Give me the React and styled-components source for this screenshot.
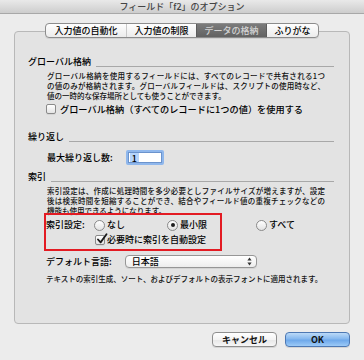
import React from "react";
import styled, { createGlobalStyle, css } from "styled-components";

const GlobalStyle = createGlobalStyle`
  html, body {
    margin: 0;
    padding: 0;
    background: #ececec;
  }
  body {
    font-family: "Noto Sans CJK JP", "Liberation Sans", sans-serif;
    font-weight: 500;
    color: #000;
  }
  * {
    box-sizing: border-box;
  }
`;

const Window = styled.div`
  width: 364px;
  height: 360px;
  display: flex;
  flex-direction: column;
  background: #ececec;
  overflow: hidden;
`;

const TitleBar = styled.div`
  flex: none;
  height: 14px;
  display: flex;
  align-items: center;
  justify-content: center;
  background: linear-gradient(#e9e9e9, #cdcdcd);
  border-bottom: 1px solid #a8a8a8;
  font-size: 9px;
  line-height: 13px;
  color: #444;
`;

const Panel = styled.div`
  flex: none;
  margin: 17px 14px 0;
  height: 293px;
  border: 1px solid #b8b8b8;
  border-radius: 4px;
  background: #e3e3e3;
  display: flex;
  flex-direction: column;
  padding: 0 15px 0 13px;
`;

const TabBar = styled.div`
  align-self: center;
  margin: -9px 0 0 2px;
  display: flex;
  height: 15px;
  border: 1px solid #8c8c8c;
  border-radius: 4px;
  background: linear-gradient(#fefefe, #ececec);
  overflow: hidden;
  box-shadow: 0 1px 0 rgba(0, 0, 0, 0.08);
`;

const Tab = styled.div`
  display: flex;
  align-items: center;
  justify-content: center;
  width: ${(p) => p.$w}px;
  font-size: 9px;
  line-height: 13px;
  color: ${(p) => (p.$active ? "#d4d4d4" : "#000")};
  background: ${(p) =>
    p.$active ? "linear-gradient(#7b7b7b, #626262)" : "transparent"};
  ${(p) =>
    p.$sep &&
    css`
      border-left: 1px solid ${p.$sep === "dark" ? "#5c5c5c" : "#c9c9c9"};
    `}
`;

const SectionHead = styled.div`
  display: flex;
  align-items: flex-end;
  gap: 5px;
  height: 12px;
  margin-top: ${(p) => p.$mt}px;
  font-size: 9px;
  line-height: 12px;
  &::after {
    content: "";
    flex: 1;
    height: 1px;
    margin-bottom: 1px;
    background: #a8a8a8;
  }
`;

const Body = styled.div`
  margin-left: 18px;
  display: flex;
  flex-direction: column;
`;

const Desc = styled.div`
  margin: 3px 0 0 1px;
  width: 278px;
  font-size: 7.5px;
  line-height: 10px;
  color: #111;
`;

const DescLine = styled.div`
  ${(p) =>
    p.$full &&
    css`
      text-align: justify;
      text-align-last: justify;
      text-justify: inter-character;
    `}
`;

const Row = styled.div`
  display: flex;
  align-items: center;
  height: ${(p) => p.$h || 12}px;
  margin-top: ${(p) => p.$mt || 0}px;
  margin-left: ${(p) => p.$ml || 0}px;
  font-size: 9px;
  line-height: 12px;
`;

const Label = styled.span`
  flex: none;
  width: ${(p) => (p.$w ? `${p.$w}px` : "auto")};
  font-size: ${(p) => p.$fs || 9}px;
  margin-left: ${(p) => p.$ml || 0}px;
  white-space: nowrap;
`;

const CheckBox = styled.span`
  position: relative;
  flex: none;
  width: 10px;
  height: 10px;
  border: 1px solid #8a8a8a;
  border-radius: 2px;
  background: linear-gradient(#ffffff, #e4e4e4);
  box-shadow: 0 1px 0 rgba(0, 0, 0, 0.06);
  svg {
    position: absolute;
    left: 0px;
    top: -3px;
  }
`;

const Option = styled.div`
  flex: none;
  display: flex;
  align-items: center;
  width: ${(p) => (p.$w ? `${p.$w}px` : "auto")};
`;

const Radio = styled.span`
  flex: none;
  width: 11px;
  height: 11px;
  border-radius: 50%;
  border: 1px solid #8a8a8a;
  background: linear-gradient(#ffffff, #e2e2e2);
  display: flex;
  align-items: center;
  justify-content: center;
  &::after {
    content: "";
    display: ${(p) => (p.$on ? "block" : "none")};
    width: 4px;
    height: 4px;
    border-radius: 50%;
    background: #1e1e1e;
  }
`;

const NumberField = styled.div`
  flex: none;
  width: 38px;
  height: 15px;
  margin-left: 13px;
  border: 2px solid #8fb7ec;
  border-radius: 2px;
  box-shadow: inset 0 0 0 1px #6b93cc;
  background: #fff;
  padding: 1px 0 1px 2px;
  display: flex;
`;

const Selected = styled.span`
  background: #b5d4fb;
  padding: 0 2px;
  font-size: 9px;
  line-height: 11px;
`;

const IndexBox = styled.div`
  position: relative;
  display: flex;
  flex-direction: column;
`;

const RedFrame = styled.div`
  position: absolute;
  left: -2px;
  top: -3px;
  width: 178px;
  bottom: -5px;
  border: 2px solid #e31b23;
  pointer-events: none;
`;

const Popup = styled.div`
  flex: none;
  width: 132px;
  height: 13px;
  margin-left: 13px;
  border: 1px solid #969696;
  border-radius: 4px;
  background: linear-gradient(#ffffff, #ededed);
  box-shadow: 0 1px 0 rgba(0, 0, 0, 0.07);
  display: flex;
  align-items: center;
  justify-content: space-between;
  padding: 0 4px 0 6px;
  font-size: 9px;
  line-height: 11px;
`;

const Note = styled.div`
  margin-top: 6px;
  font-size: 7.5px;
  line-height: 10px;
  color: #111;
  white-space: nowrap;
`;

const ButtonRow = styled.div`
  display: flex;
  justify-content: flex-end;
  gap: 8px;
  margin: 8px 14px 0 0;
`;

const Button = styled.div`
  width: 65px;
  height: 15px;
  display: flex;
  align-items: center;
  justify-content: center;
  border-radius: 4px;
  font-size: 9px;
  font-weight: 700;
  line-height: 13px;
  color: #111;
  border: 1px solid ${(p) => (p.$primary ? "#4d78b3" : "#8f8f8f")};
  background: ${(p) =>
    p.$primary
      ? "linear-gradient(#bcdaf8 0%, #85b8ef 45%, #6ea8ea 55%, #9ccaf7 100%)"
      : "linear-gradient(#ffffff 0%, #f4f4f4 50%, #e8e8e8 55%, #f6f6f6 100%)"};
  box-shadow: 0 1px 0 rgba(0, 0, 0, 0.1);
`;

function CheckMark() {
  return (
    <svg width="12" height="12" viewBox="0 0 12 12">
      <path
        d="M2 6.5 L4.6 9.4 L10.5 1.2"
        fill="none"
        stroke="#1a1a1a"
        strokeWidth="1.8"
        strokeLinecap="round"
        strokeLinejoin="round"
      />
    </svg>
  );
}

function UpDown() {
  return (
    <svg width="5" height="9" viewBox="0 0 5 9">
      <path d="M2.5 0.5 L4.6 3.5 L0.4 3.5 Z" fill="#333" />
      <path d="M2.5 8.5 L4.6 5.5 L0.4 5.5 Z" fill="#333" />
    </svg>
  );
}

export default function App() {
  return (
    <Window>
      <GlobalStyle />
      <TitleBar>フィールド「f2」のオプション</TitleBar>
      <Panel>
        <TabBar>
          <Tab $w={80}>入力値の自動化</Tab>
          <Tab $w={70} $sep="light">入力値の制限</Tab>
          <Tab $w={70} $sep="dark" $active>
            データの格納
          </Tab>
          <Tab $w={52} $sep="dark">ふりがな</Tab>
        </TabBar>

        <SectionHead $mt={18}>グローバル格納</SectionHead>
        <Body>
          <Desc>
            <DescLine $full>
              グローバル格納を使用するフィールドには、すべてのレコードで共有される1つ
            </DescLine>
            <DescLine $full>
              の値のみが格納されます。グローバルフィールドは、スクリプトの使用時など、
            </DescLine>
            <DescLine>値の一時的な保存場所としても使うことができます。</DescLine>
          </Desc>
          <Row $mt={2}>
            <CheckBox />
            <Label $fs={9.2} $ml={4}>
              グローバル格納（すべてのレコードに1つの値）を使用する
            </Label>
          </Row>
        </Body>

        <SectionHead $mt={16}>繰り返し</SectionHead>
        <Body>
          <Row $mt={7} $h={15} $ml={1}>
            <Label>最大繰り返し数:</Label>
            <NumberField>
              <Selected>1</Selected>
            </NumberField>
          </Row>
        </Body>

        <SectionHead $mt={6}>索引</SectionHead>
        <Body>
          <Desc>
            <DescLine $full>
              索引設定は、作成に処理時間を多少必要としファイルサイズが増えますが、設定
            </DescLine>
            <DescLine $full>
              後は検索時間を短縮することができ、結合やフィールド値の重複チェックなどの
            </DescLine>
            <DescLine>機能も使用できるようになります。</DescLine>
          </Desc>
          <IndexBox>
            <Row $mt={3}>
              <Label $w={48}>索引設定:</Label>
              <Option $w={73}>
                <Radio />
                <Label $ml={2}>なし</Label>
              </Option>
              <Option $w={89}>
                <Radio $on />
                <Label $ml={2}>最小限</Label>
              </Option>
              <Option>
                <Radio />
                <Label $ml={2}>すべて</Label>
              </Option>
            </Row>
            <Row $mt={3} $ml={49}>
              <CheckBox>
                <CheckMark />
              </CheckBox>
              <Label $ml={2}>必要時に索引を自動設定</Label>
            </Row>
            <RedFrame />
          </IndexBox>
          <Row $mt={9} $h={13}>
            <Label>デフォルト言語:</Label>
            <Popup>
              <span>日本語</span>
              <UpDown />
            </Popup>
          </Row>
          <Note>
            テキストの索引生成、ソート、およびデフォルトの表示フォントに適用されます。
          </Note>
        </Body>
      </Panel>
      <ButtonRow>
        <Button>キャンセル</Button>
        <Button $primary>OK</Button>
      </ButtonRow>
    </Window>
  );
}
